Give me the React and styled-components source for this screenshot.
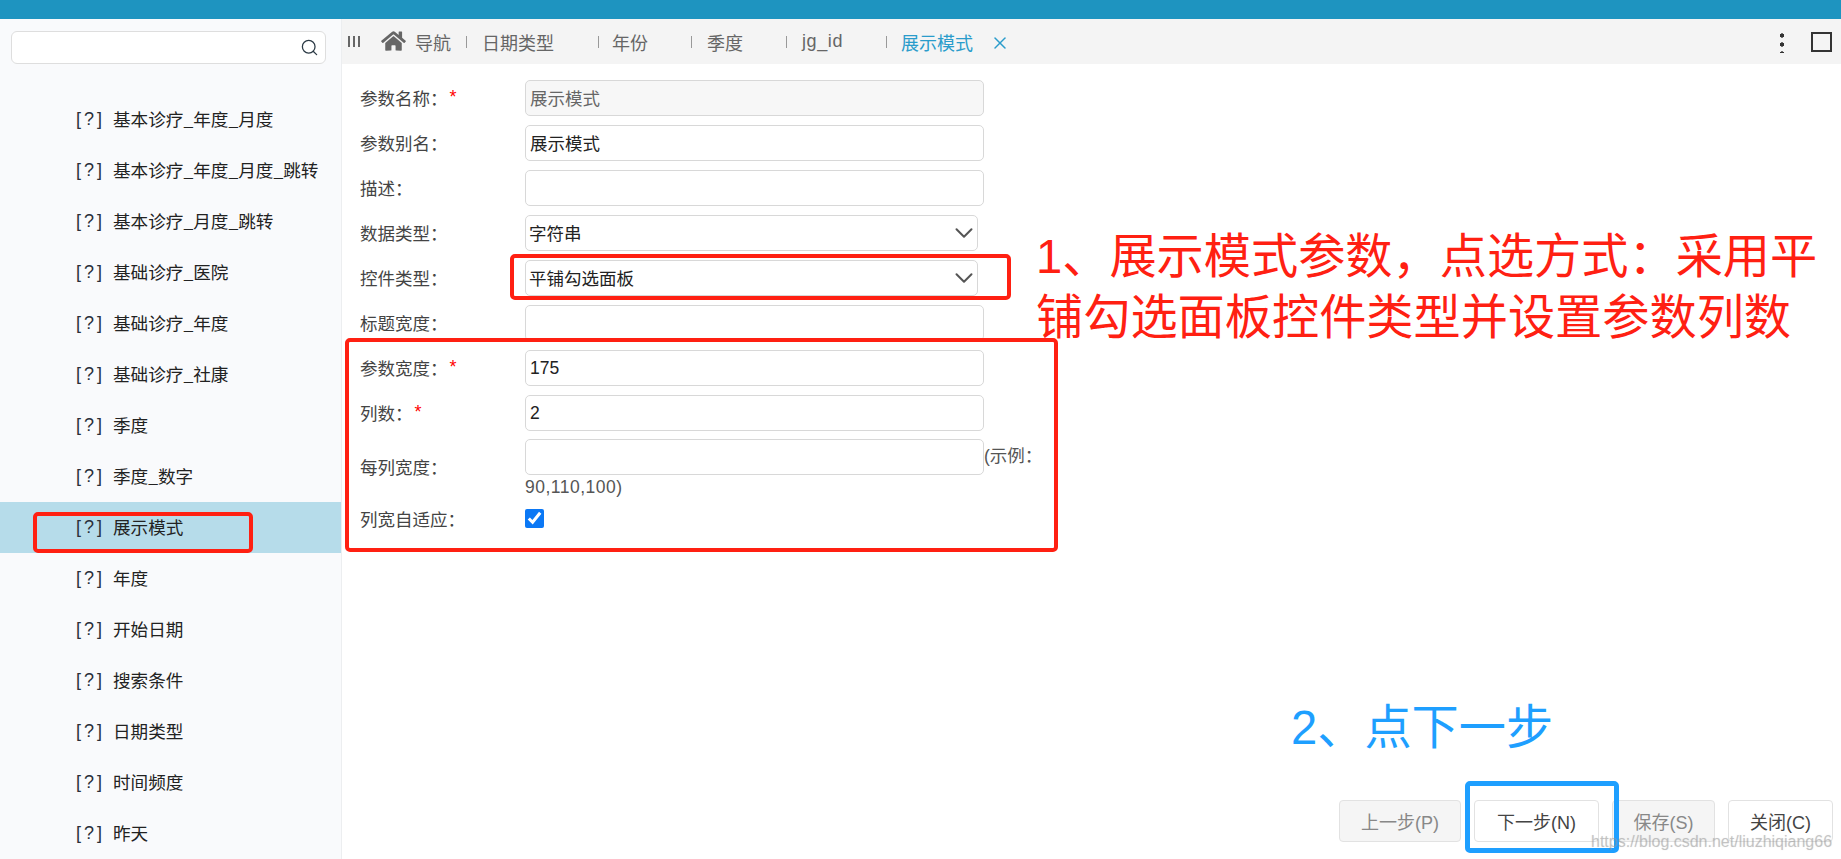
import React from "react";
import styled, { createGlobalStyle } from "styled-components";
import { Search, ChevronDown, X } from "lucide-react";
import { FaHome } from "react-icons/fa";

const Global = createGlobalStyle`
  html, body { margin: 0; padding: 0; background: #fff; overflow: hidden; }
  * { box-sizing: border-box; }
  body { font-family: "Liberation Sans", "Noto Sans CJK SC", sans-serif; font-size: 17.5px; color: #444; }
`;

const Page = styled.div`
  position: relative;
  width: 1841px;
  height: 859px;
  display: flex;
  flex-direction: column;
  overflow: hidden;
`;
const TopBar = styled.header`
  height: 19px;
  flex: none;
  background: #1e94c0;
`;
const Body = styled.div`
  flex: 1;
  display: flex;
  min-height: 0;
`;
const Sidebar = styled.aside`
  width: 342px;
  flex: none;
  background: #f9fafc;
  border-right: 1px solid #eceef0;
  padding-top: 12px;
  overflow: hidden;
`;
const SearchBox = styled.div`
  width: 315px;
  height: 33px;
  margin: 0 0 30px 11px;
  background: #fff;
  border: 1px solid #dedede;
  border-radius: 6px;
  display: flex;
  align-items: center;
  justify-content: flex-end;
  padding-right: 6px;
  color: #2b3a45;
`;
const TreeItem = styled.div`
  height: 51px;
  display: flex;
  align-items: center;
  padding: 0 0 2px 76px;
  font-family: "Noto Sans CJK SC", sans-serif;
  font-size: 17.6px;
  color: #222;
  background: ${(p) => (p.$active ? "#b6dcea" : "transparent")};
`;
const Unknown = styled.span`
  width: 37px;
  flex: none;
  padding-top: 2px;
  font-family: "Liberation Sans", sans-serif;
  font-size: 18px;
  letter-spacing: 3px;
  color: #2a2f3a;
`;
const Main = styled.main`
  flex: 1;
  min-width: 0;
  display: flex;
  flex-direction: column;
`;
const TabBar = styled.nav`
  height: 45px;
  flex: none;
  background: #f4f4f4;
  display: flex;
  align-items: center;
  padding-left: 6px;
  font-size: 18px;
  color: #666;
`;
const Bars = styled.span`
  width: 12px;
  height: 11px;
  flex: none;
  margin-right: 21px;
  background: repeating-linear-gradient(90deg, #666 0 2px, transparent 2px 5px);
`;
const HomeIcon = styled(FaHome)`
  width: 25px;
  height: 22px;
  flex: none;
  color: #666;
  margin: -1px 9px 0 0;
`;
const Tab = styled.span`
  flex: none;
  width: ${(p) => p.$w}px;
  padding-left: ${(p) => p.$pad}px;
  letter-spacing: ${(p) => p.$track ?? 0}px;
  color: ${(p) => (p.$active ? "#2a9ccb" : "#666")};
  white-space: nowrap;
`;
const TabSep = styled.i`
  width: 1px;
  height: 12px;
  flex: none;
  background: #999;
`;
const CloseTab = styled(X)`
  flex: none;
  color: #2a9ccb;
  margin: 2px 0 0 15px;
`;
const TabTools = styled.div`
  margin-left: auto;
  display: flex;
  align-items: center;
  padding-right: 9px;
`;
const Dots = styled.span`
  width: 4px;
  height: 22px;
  margin-right: 27px;
  background: radial-gradient(circle at center, #333 0 2px, transparent 2.2px) center top / 4px 9px repeat-y;
`;
const Square = styled.span`
  width: 21px;
  height: 20px;
  border: 2px solid #333;
`;
const Form = styled.form`
  flex: 1;
  padding: 16px 0 0 18px;
  min-height: 0;
`;
const Row = styled.div`
  display: flex;
  align-items: center;
  margin-bottom: ${(p) => p.$gap ?? 9}px;
`;
const Label = styled.label`
  width: 165px;
  flex: none;
  padding-bottom: 2px;
  color: #444;
  white-space: nowrap;
`;
const Star = styled.sup`
  color: #f00;
  font-size: 18px;
  line-height: 1;
  margin-left: 2px;
  vertical-align: 2px;
`;
const TextInput = styled.input`
  width: 459px;
  height: 36px;
  flex: none;
  padding: 0 4px ${(p) => (p.$numeric ? 0 : 2)}px;
  font: inherit;
  color: ${(p) => (p.$locked ? "#666" : "#222")};
  background: ${(p) => (p.$locked ? "#f7f7f7" : "#fff")};
  border: 1px solid #d8d8d8;
  border-radius: 5px;
  outline: none;
  vertical-align: middle;
`;
const SelectBox = styled.div`
  width: 453px;
  height: 36px;
  padding: 0 0 2px 3px;
  display: flex;
  align-items: center;
  justify-content: space-between;
  color: #222;
  background: #fff;
  border: 1px solid #d8d8d8;
  border-radius: 5px;
`;
const SelectArrow = styled(ChevronDown)`
  margin: 2px -2px 0 0;
  color: #555;
`;
const Control = styled.div`
  width: 530px;
  margin-bottom: -4px;
  line-height: 24px;
  color: #555;
`;
const ExampleValue = styled.span`
  letter-spacing: 0.5px;
`;
const Check = styled.input`
  width: 19px;
  height: 19px;
  margin: -2px 0 0;
  accent-color: #0b78f5;
`;
const Footer = styled.footer`
  flex: none;
  display: flex;
  justify-content: flex-end;
  gap: 13px;
  padding: 0 8px 17px 0;
`;
const Button = styled.button`
  width: ${(p) => p.$w}px;
  height: 42px;
  font-family: inherit;
  font-size: 18px;
  color: ${(p) => (p.disabled ? "#888" : "#444")};
  background: ${(p) => (p.disabled ? "#f5f5f5" : "#fff")};
  border: 1px solid #e2e2e2;
  border-radius: 4px;
  padding: 0;
`;
const Frame = styled.div`
  position: absolute;
  left: ${(p) => p.$x}px;
  top: ${(p) => p.$y}px;
  width: ${(p) => p.$w}px;
  height: ${(p) => p.$h}px;
  border: ${(p) => p.$t ?? 4}px solid ${(p) => p.$color};
  border-radius: 5px;
  pointer-events: none;
`;
const Note = styled.div`
  position: absolute;
  left: ${(p) => p.$x}px;
  top: ${(p) => p.$y}px;
  font-size: 47.2px;
  line-height: 61px;
  white-space: nowrap;
  color: ${(p) => p.$color};
`;
const Watermark = styled.div`
  position: absolute;
  left: 1591px;
  top: 832px;
  font-size: 16px;
  line-height: 20px;
  white-space: nowrap;
  color: rgba(140, 140, 140, 0.38);
  text-shadow: 0 0 1px rgba(160, 160, 160, 0.35);
`;

const items = [
  "基本诊疗_年度_月度", "基本诊疗_年度_月度_跳转", "基本诊疗_月度_跳转", "基础诊疗_医院",
  "基础诊疗_年度", "基础诊疗_社康", "季度", "季度_数字", "展示模式", "年度", "开始日期",
  "搜索条件", "日期类型", "时间频度", "昨天",
];
const RED = "#ff2012";
const BLUE = "#1e9fff";

export default function App() {
  return (
    <Page>
      <Global />
      <TopBar />
      <Body>
        <Sidebar>
          <SearchBox><Search size={19} strokeWidth={1.6} /></SearchBox>
          {items.map((t) => (
            <TreeItem key={t} $active={t === "展示模式"}>
              <Unknown>[?]</Unknown>{t}
            </TreeItem>
          ))}
        </Sidebar>
        <Main>
          <TabBar>
            <Bars />
            <HomeIcon />
            <Tab $w={51} $pad={0}>导航</Tab><TabSep />
            <Tab $w={131} $pad={15}>日期类型</Tab><TabSep />
            <Tab $w={92} $pad={13}>年份</Tab><TabSep />
            <Tab $w={94} $pad={15}>季度</Tab><TabSep />
            <Tab $w={99} $pad={15} $track={0.6}>jg_id</Tab><TabSep />
            <Tab $w={88} $pad={14} $active>展示模式</Tab>
            <CloseTab size={20} strokeWidth={1.8} />
            <TabTools><Dots /><Square /></TabTools>
          </TabBar>
          <Form>
            <Row><Label>参数名称：<Star>*</Star></Label><TextInput readOnly $locked value="展示模式" /></Row>
            <Row><Label>参数别名：</Label><TextInput readOnly value="展示模式" /></Row>
            <Row><Label>描述：</Label><TextInput readOnly value="" /></Row>
            <Row><Label>数据类型：</Label><SelectBox>字符串<SelectArrow size={30} strokeWidth={1.6} /></SelectBox></Row>
            <Row><Label>控件类型：</Label><SelectBox>平铺勾选面板<SelectArrow size={30} strokeWidth={1.6} /></SelectBox></Row>
            <Row><Label>标题宽度：</Label><TextInput readOnly value="" /></Row>
            <Row><Label>参数宽度：<Star>*</Star></Label><TextInput readOnly $numeric value="175" /></Row>
            <Row $gap={8}><Label>列数：<Star>*</Star></Label><TextInput readOnly $numeric value="2" /></Row>
            <Row $gap={11}>
              <Label>每列宽度：</Label>
              <Control><TextInput readOnly value="" />(示例：<br /><ExampleValue>90,110,100)</ExampleValue></Control>
            </Row>
            <Row><Label>列宽自适应：</Label><Check type="checkbox" checked readOnly /></Row>
          </Form>
          <Footer>
            <Button $w={122} disabled>上一步(P)</Button>
            <Button $w={125}>下一步(N)</Button>
            <Button $w={103} disabled>保存(S)</Button>
            <Button $w={105}>关闭(C)</Button>
          </Footer>
        </Main>
      </Body>
      <Frame $x={33} $y={512} $w={220} $h={41} $color={RED} />
      <Frame $x={510} $y={254} $w={501} $h={46} $color={RED} />
      <Frame $x={345} $y={338} $w={713} $h={214} $color={RED} />
      <Frame $x={1465} $y={781} $w={154} $h={72} $t={5} $color={BLUE} />
      <Note $x={1036} $y={226} $color={RED}>1、展示模式参数，点选方式：采用平<br />铺勾选面板控件类型并设置参数列数</Note>
      <Note $x={1291} $y={697} $color={BLUE}>2、点下一步</Note>
      <Watermark>https://blog.csdn.net/liuzhiqiang66</Watermark>
    </Page>
  );
}
